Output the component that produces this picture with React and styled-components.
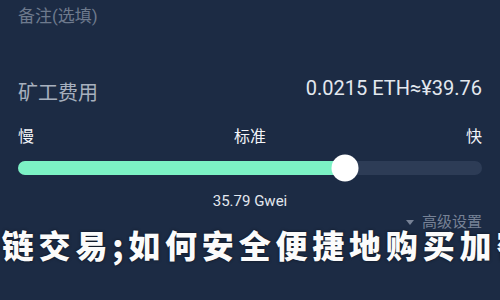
import styled, { createGlobalStyle } from 'styled-components';

const GlobalStyle = createGlobalStyle`
  html, body {
    margin: 0;
    padding: 0;
    background: #1c2b44;
  }
  body {
    font-family: Roboto, "Noto Sans CJK SC", sans-serif;
  }
`;

const Page = styled.div`
  position: relative;
  width: 500px;
  height: 300px;
  overflow: hidden;
  background: #1c2b44;
  padding: 0 18px;
  box-sizing: border-box;
  display: flex;
  flex-direction: column;
`;

const Remark = styled.div`
  margin-top: 5px;
  font-size: 17px;
  line-height: 22px;
  color: #6e7a8d;
`;

const FeeRow = styled.div`
  margin-top: 48px;
  display: flex;
  justify-content: space-between;
  align-items: center;
  height: 26px;
`;

const FeeLabel = styled.span`
  font-size: 20px;
  color: #a7b0be;
  position: relative;
  top: 3px;
`;

const FeeValue = styled.span`
  font-size: 20px;
  color: #e3e8ef;
`;

const SpeedRow = styled.div`
  margin-top: 26px;
  display: flex;
  justify-content: space-between;
  font-size: 16px;
  line-height: 20px;
  color: #f2f4f8;
`;

const Track = styled.div`
  position: relative;
  margin-top: 14px;
  height: 14px;
  border-radius: 7px;
  background: #2d3c56;
`;

const Fill = styled.div`
  height: 100%;
  border-radius: 7px;
  background: #7cf2c5;
`;

const Thumb = styled.div`
  position: absolute;
  top: 50%;
  width: 27px;
  height: 27px;
  border-radius: 50%;
  background: #fff;
  transform: translate(-50%, -50%);
`;

const Gwei = styled.div`
  margin-top: 17px;
  text-align: center;
  font-size: 15px;
  line-height: 18px;
  color: #e3e8ef;
`;

const Advanced = styled.div`
  margin-top: 3px;
  align-self: flex-end;
  display: flex;
  align-items: center;
  gap: 8px;
  font-size: 15px;
  line-height: 18px;
  color: #778296;
`;

const Caret = styled.span`
  width: 0;
  height: 0;
  border-left: 4px solid transparent;
  border-right: 4px solid transparent;
  border-top: 5px solid #778296;
`;

const Title = styled.div`
  position: absolute;
  left: -35px;
  top: 224px;
  white-space: nowrap;
  font-family: "Noto Sans CJK SC", serif;
  font-weight: 900;
  font-size: 32px;
  letter-spacing: 4.8px;
  line-height: 40px;
  color: #fbfbfb;
  text-shadow: 0 0 3px rgba(0, 0, 0, 0.6);
`;

export default function App() {
  const percent = 70.5;
  return (
    <Page>
      <GlobalStyle />
      <Remark>备注(选填)</Remark>
      <FeeRow>
        <FeeLabel>矿工费用</FeeLabel>
        <FeeValue>0.0215 ETH≈¥39.76</FeeValue>
      </FeeRow>
      <SpeedRow>
        <span>慢</span>
        <span>标准</span>
        <span>快</span>
      </SpeedRow>
      <Track>
        <Fill style={{ width: `${percent}%` }} />
        <Thumb style={{ left: `${percent}%` }} />
      </Track>
      <Gwei>35.79 Gwei</Gwei>
      <Advanced>
        <Caret />
        高级设置
      </Advanced>
      <Title>上链交易;如何安全便捷地购买加密</Title>
    </Page>
  );
}
